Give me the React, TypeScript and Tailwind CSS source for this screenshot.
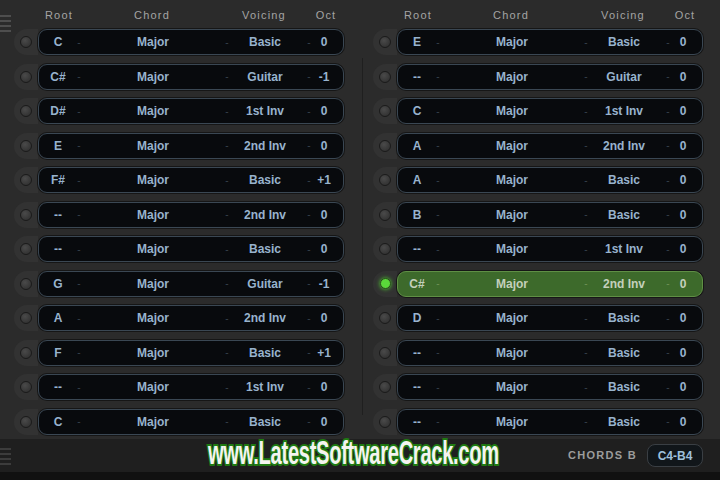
import React from "react";

type R = { root: string; chord: string; voicing: string; oct: string; active?: boolean };

const left: R[] = [
  { root: "C", chord: "Major", voicing: "Basic", oct: "0" },
  { root: "C#", chord: "Major", voicing: "Guitar", oct: "-1" },
  { root: "D#", chord: "Major", voicing: "1st Inv", oct: "0" },
  { root: "E", chord: "Major", voicing: "2nd Inv", oct: "0" },
  { root: "F#", chord: "Major", voicing: "Basic", oct: "+1" },
  { root: "--", chord: "Major", voicing: "2nd Inv", oct: "0" },
  { root: "--", chord: "Major", voicing: "Basic", oct: "0" },
  { root: "G", chord: "Major", voicing: "Guitar", oct: "-1" },
  { root: "A", chord: "Major", voicing: "2nd Inv", oct: "0" },
  { root: "F", chord: "Major", voicing: "Basic", oct: "+1" },
  { root: "--", chord: "Major", voicing: "1st Inv", oct: "0" },
  { root: "C", chord: "Major", voicing: "Basic", oct: "0" },
];

const right: R[] = [
  { root: "E", chord: "Major", voicing: "Basic", oct: "0" },
  { root: "--", chord: "Major", voicing: "Guitar", oct: "0" },
  { root: "C", chord: "Major", voicing: "1st Inv", oct: "0" },
  { root: "A", chord: "Major", voicing: "2nd Inv", oct: "0" },
  { root: "A", chord: "Major", voicing: "Basic", oct: "0" },
  { root: "B", chord: "Major", voicing: "Basic", oct: "0" },
  { root: "--", chord: "Major", voicing: "1st Inv", oct: "0" },
  { root: "C#", chord: "Major", voicing: "2nd Inv", oct: "0", active: true },
  { root: "D", chord: "Major", voicing: "Basic", oct: "0" },
  { root: "--", chord: "Major", voicing: "Basic", oct: "0" },
  { root: "--", chord: "Major", voicing: "Basic", oct: "0" },
  { root: "--", chord: "Major", voicing: "Basic", oct: "0" },
];

function Header() {
  return (
    <div className="h-[25px] pt-[5px] flex items-center pl-[24px] text-[11px] tracking-[1.2px] text-[#a4a4a4]">
      <div className="w-[38px] ml-[2px] text-center">Root</div>
      <div className="w-[6px]" />
      <div className="w-[136px] text-center">Chord</div>
      <div className="w-[6px]" />
      <div className="w-[76px] text-center">Voicing</div>
      <div className="w-[18px]" />
      <div className="w-[12px] flex justify-center whitespace-nowrap">Oct</div>
    </div>
  );
}

function Row({ r }: { r: R }) {
  const txt = r.active ? "text-[#c4d0bc]" : "text-[#98b3cd]";
  const dash = r.active ? "text-[#6f9256]" : "text-[#37424c]";
  return (
    <div className="h-[34.5px] flex items-center">
      <div className="w-[24px] h-[26px] rounded-l-full bg-[#323232] flex items-center justify-center">
        {r.active ? (
          <div className="w-[11px] h-[11px] rounded-full bg-[#5ad83a] border border-[#2a4a1c] shadow-[0_0_4px_#4fcf30]" />
        ) : (
          <div className="w-[12px] h-[12px] rounded-full bg-[radial-gradient(circle_at_40%_35%,#4a4a4a,#2b2b2b)] border border-[#1a1a1a]" />
        )}
      </div>
      <div
        className={
          "w-[306px] h-[26px] rounded-[9px] border flex items-center text-[12px] font-bold shadow-[0_0_0_1px_#161616] " +
          (r.active
            ? "bg-[#3d6a2b] border-[#5f8f45]"
            : "bg-[#080a0d] border-[#3a4753]")
        }
      >
        <div className={"w-[36px] ml-[1px] text-center " + txt}>{r.root}</div>
        <div className={"w-[6px] text-center font-normal text-[10px] " + dash}>-</div>
        <div className={"w-[142px] text-center " + txt}>{r.chord}</div>
        <div className={"w-[6px] text-center font-normal text-[10px] " + dash}>-</div>
        <div className={"w-[70px] text-center whitespace-nowrap " + txt}>{r.voicing}</div>
        <div className={"w-[18px] text-center font-normal text-[10px] " + dash}>-</div>
        <div className={"w-[12px] flex justify-center " + txt}>{r.oct}</div>
      </div>
    </div>
  );
}

function Burger({ color }: { color: string }) {
  return (
    <div className="flex flex-col gap-[3px] w-[11px]">
      {[0, 1, 2, 3].map((i) => (
        <div key={i} className="h-[2px] w-[11px]" style={{ background: color }} />
      ))}
    </div>
  );
}

export default function App() {
  return (
    <div
      className="w-[720px] h-[480px] bg-[#2b2b2b] flex flex-col overflow-hidden"
      style={{ fontFamily: '"Liberation Sans", Arial, sans-serif' }}
    >
      <div className="h-[439px] flex">
        <div className="w-[14px] pt-[15px]">
          <Burger color="#4e4e4e" />
        </div>
        <div className="w-[348px]">
          <Header />
          {left.map((r, i) => (
            <Row key={i} r={r} />
          ))}
        </div>
        <div className="w-px bg-[#1f1f1f] mt-[58px] mb-[24px]" />
        <div className="pl-[10px]">
          <Header />
          {right.map((r, i) => (
            <Row key={i} r={r} />
          ))}
        </div>
      </div>
      <div className="flex-1 flex flex-col bg-[#1f1f1f]">
        <div className="h-[33px] flex items-center">
          <div className="w-[11px] mt-[2px]">
            <Burger color="#3c3c3c" />
          </div>
          <div className="ml-[197px] w-[289px] h-[33px] relative overflow-visible">
            <div
              className="absolute left-0 top-[-3px] origin-left scale-x-[0.61] whitespace-nowrap text-[33px] font-bold text-[#f4f4f0] [-webkit-text-stroke:4px_#1f7a12] [paint-order:stroke_fill] leading-none tracking-[-0.5px]"
            >
              www.LatestSoftwareCrack.com
            </div>
          </div>
          <div className="ml-auto text-[11px] tracking-[1.3px] text-[#9c9c9c] font-semibold mr-[10px]">CHORDS B</div>
          <div className="w-[56px] h-[23px] rounded-[8px] bg-[#11161a] border border-[#3a3f44] flex items-center justify-center text-[12px] font-bold text-[#9fc0dc] mr-[17px]">
            C4-B4
          </div>
        </div>
        <div className="flex-1 bg-[#111111]" />
      </div>
    </div>
  );
}
